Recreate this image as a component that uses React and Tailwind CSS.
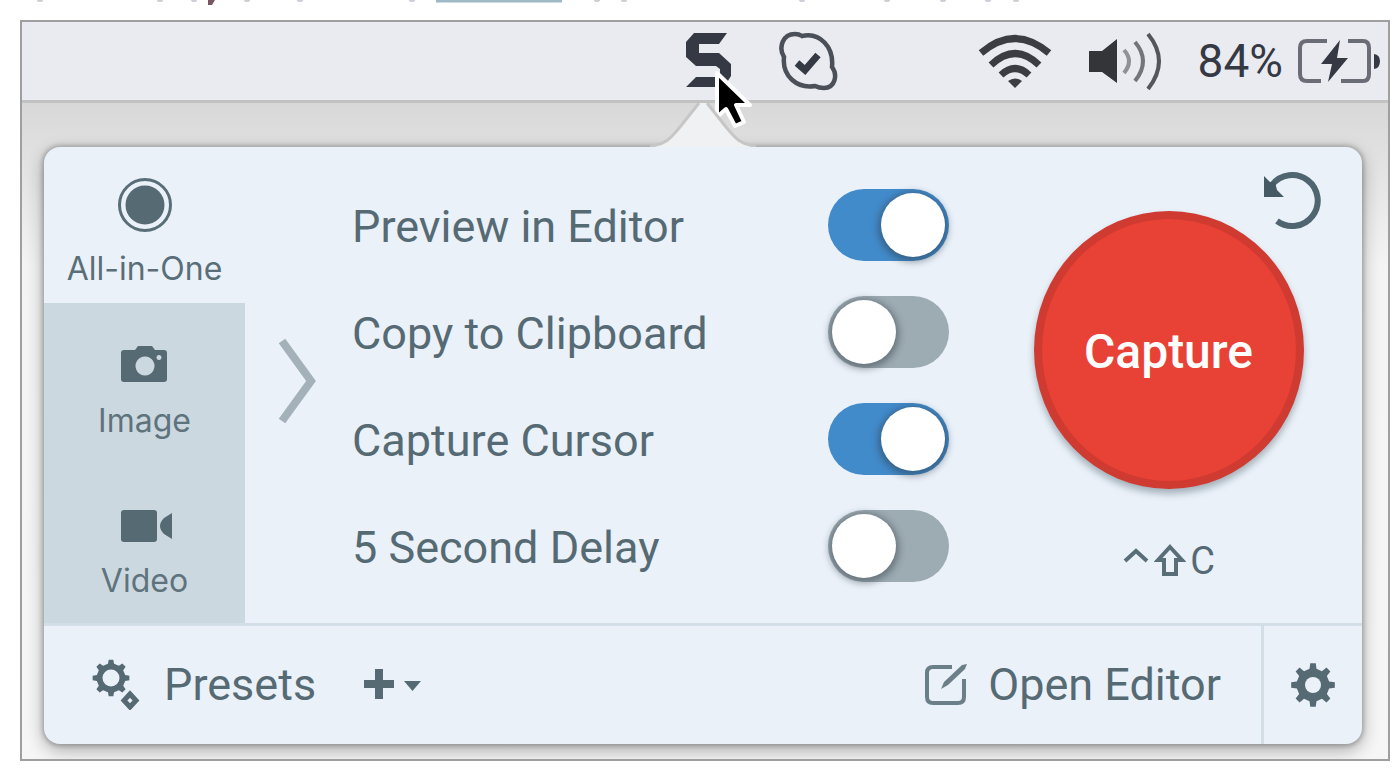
import { useState } from "react";

const tabs = [
  { id: "all", label: "All-in-One", icon: RecordIcon },
  { id: "image", label: "Image", icon: CameraIcon },
  { id: "video", label: "Video", icon: VideoIcon },
];

const options = [
  { id: "preview", label: "Preview in Editor", on: true },
  { id: "clipboard", label: "Copy to Clipboard", on: false },
  { id: "cursor", label: "Capture Cursor", on: true },
  { id: "delay", label: "5 Second Delay", on: false },
];

function gearPath(cx, cy, outer, inner, teeth) {
  const step = (Math.PI * 2) / teeth;
  const pt = (r, a) => `${(cx + r * Math.sin(a)).toFixed(2)} ${(cy - r * Math.cos(a)).toFixed(2)}`;
  let d = "";
  for (let i = 0; i < teeth; i++) {
    const a = i * step;
    d += `${i ? "L" : "M"}${pt(inner, a - step * 0.27)}L${pt(outer, a - step * 0.16)}L${pt(outer, a + step * 0.16)}L${pt(inner, a + step * 0.27)}`;
  }
  return d + "Z";
}

function RecordIcon() {
  return (
    <svg className="h-14 w-14" viewBox="0 0 56 56" aria-hidden="true">
      <circle cx="28" cy="28" r="25.5" fill="none" stroke="#5a6e78" strokeWidth="3" />
      <circle cx="28" cy="28" r="19.500" fill="#566a74" />
    </svg>
  );
}

function CameraIcon() {
  return (
    <svg className="h-14 w-14" viewBox="0 0 56 56" aria-hidden="true">
      <path
        fill="#566a74"
        fillRule="evenodd"
        d="M7 13h11l3-4h14l3 4h9q3 0 3 3v26q0 3-3 3H7q-3 0-3-3V16q0-3 3-3ZM28 19.500a9.500 9.500 0 1 0 .01 0ZM42 18a2.500 2.500 0 1 0 .01 0Z"
      />
    </svg>
  );
}

function VideoIcon() {
  return (
    <svg className="h-14 w-14" viewBox="0 0 56 56" aria-hidden="true">
      <rect x="4" y="13" width="36" height="32" rx="3" fill="#566a74" />
      <path d="M55 16v26l-8-5q-8-8 0-16Z" fill="#566a74" />
    </svg>
  );
}

function PageTextEdge() {
  return (
    <svg className="block h-5 w-[1400px]" viewBox="0 0 1400 20" aria-hidden="true">
      <path d="M436 0h126v2.500H436Z" fill="#9db9c6" />
      <path d="M208 0h7l-3 5h-4Z" fill="#7b5560" />
      {[40, 160, 194, 247, 300, 412, 597, 624, 802, 887, 943, 988, 1016].map((x) => (
        <ellipse key={x} cx={x} cy="0" rx="3" ry="2" fill="#cfcdd6" />
      ))}
    </svg>
  );
}

function Pointer() {
  return (
    <svg className="absolute top-9 left-6 z-10 h-16 w-12" viewBox="0 0 48 64" aria-hidden="true">
      <path
        d="M9 5V49L18 41L27 58L36 54L28 37H42Z"
        fill="#000"
        stroke="#fff"
        strokeWidth="4"
        strokeLinejoin="round"
      />
    </svg>
  );
}

function MenuBar() {
  return (
    <header className="flex h-[81px] items-center justify-end border-b-3 border-[#c2c2c2] bg-[#e9ebf0] pr-[7px]">
      <div className="relative mr-11">
        <button type="button" aria-label="Capture menu" className="block">
          <svg className="h-[58px] w-[50px]" viewBox="0 0 50 58">
            <path
              d="M10 1H43L35 12H15V21H35L47 32V44L40 55H2L12 45H36V37L32 34H12L2 25V10Z"
              fill="#343944"
            />
          </svg>
        </button>
        <Pointer />
      </div>
      <svg className="mr-[140px] h-[60px] w-[60px]" viewBox="0 0 60 60" aria-hidden="true">
        <path
          d="M17 3Q21 3 24 5C42 1 56 16 54 36C60 44 57 57 46 57Q41 57 37 55C19 58 4 45 6 26C0 16 5 3 17 3Z"
          fill="none"
          stroke="#4b4f58"
          strokeWidth="4.500"
        />
        <path d="M19 32L27 39L40 24" fill="none" stroke="#343944" strokeWidth="7" />
      </svg>
      <svg className="mr-9 h-[54px] w-[74px]" viewBox="0 0 74 54" aria-hidden="true">
        <g fill="none" stroke="#3b3d43" strokeWidth="7">
          <path d="M3 19Q37-10 71 19" />
          <path d="M13 31Q37 8 61 31" />
          <path d="M23 41Q37 28 51 41" />
        </g>
        <path d="M30 47Q37 42 44 47L37 54Z" fill="#3b3d43" />
      </svg>
      <svg className="mr-9 h-[58px] w-[74px]" viewBox="0 0 74 58" aria-hidden="true">
        <path d="M1 19H14L29 7V51L14 40H1Z" fill="#343539" />
        <g fill="none" strokeWidth="4">
          <path d="M36 18Q46 29 36 41" stroke="#8f9197" />
          <path d="M47 10Q63 29 47 49" stroke="#73757b" />
          <path d="M60 2Q82 29 60 57" stroke="#54565c" />
        </g>
      </svg>
      <span className="mr-[14px] text-[46px] leading-none text-[#343944]">84%</span>
      <svg className="h-[46px] w-[84px]" viewBox="0 0 84 46" aria-hidden="true">
        <g fill="none" stroke="#6a6c76" strokeWidth="4">
          <path d="M30 3H10Q3 3 3 10V36Q3 43 10 43H24" />
          <path d="M51 3H66Q72 3 72 10V36Q72 43 66 43H44" />
        </g>
        <path d="M43 2L24 26H35L31 44L51 20H40Z" fill="#343944" />
        <path d="M77 16Q83 17 83 23Q83 30 77 31Z" fill="#343944" />
      </svg>
    </header>
  );
}

function CaptureTabs() {
  const [active, setActive] = useState("all");
  return (
    <nav className="grid w-[201px] shrink-0 grid-rows-[156px_160px_1fr] font-[Inter,sans-serif] text-[32px] leading-10">
      {tabs.map(({ id, label, icon: Icon }) => (
        <button
          key={id}
          type="button"
          aria-pressed={active === id}
          onClick={() => setActive(id)}
          className={
            active === id
              ? "flex flex-col items-center justify-center gap-4 pt-4 text-[#5a6e78]"
              : "flex flex-col items-center justify-center gap-2 bg-[#ccd8e0] pt-3 text-[#5f737d]"
          }
        >
          <Icon />
          {label}
        </button>
      ))}
    </nav>
  );
}

function OptionRow({ id, label, on }) {
  return (
    <li className="flex h-[107px] items-center justify-between">
      <label htmlFor={id} className="pt-1">
        {label}
      </label>
      <input
        id={id}
        type="checkbox"
        role="switch"
        defaultChecked={on}
        className="h-[72px] w-[121px] appearance-none rounded-full bg-[#9dabb3] p-1 before:block before:h-16 before:w-16 before:rounded-full before:bg-white before:shadow-[0_2px_7px_3px_rgba(40,50,60,0.45)] checked:bg-[#428bcb] checked:before:ml-[49px]"
      />
    </li>
  );
}

function CapturePanel() {
  return (
    <div className="relative flex w-[413px] shrink-0 flex-col items-center pt-16 pl-[26px]">
      <button
        type="button"
        className="h-[278px] w-[270px] rounded-[50%] border-8 border-[#cf3a31] bg-[#e84135] pt-1 text-[48px] font-medium text-white shadow-[0_5px_7px_rgba(60,80,90,0.4)]"
      >
        Capture
      </button>
      <div className="mt-12 flex items-center gap-1 text-[38px] leading-[48px]">
        <svg className="mb-3 h-4 w-7" viewBox="0 0 28 16" aria-hidden="true">
          <path d="M3 14L14 4L25 14" fill="none" stroke="#5a6e78" strokeWidth="4" />
        </svg>
        <svg className="h-9 w-8" viewBox="0 0 32 36" aria-hidden="true">
          <path
            d="M16 4L28 17H22V31H10V17H4Z"
            fill="none"
            stroke="#5a6e78"
            strokeWidth="4"
          />
        </svg>
        <span>C</span>
      </div>
      <button type="button" aria-label="Reset" className="absolute top-6 right-10">
        <svg className="block h-[60px] w-[60px]" viewBox="0 0 60 60">
          <path
            d="M10 14A25.500 25.500 0 1 1 15 50"
            fill="none"
            stroke="#4f656f"
            strokeWidth="6"
          />
          <path d="M2 5V26H22L15 19L13 11L8 11Z" fill="#455a64" />
        </svg>
      </button>
    </div>
  );
}

function Footer() {
  return (
    <footer className="flex h-[121px] items-stretch border-t-3 border-[#d3dee6] pb-[2px]">
      <button type="button" className="flex items-center gap-6 pl-12">
        <svg className="h-[52px] w-12" viewBox="0 0 48 52" aria-hidden="true">
          <path d={gearPath(19, 20, 18.5, 14.5, 8)} fill="#566a74" />
          <circle cx="19" cy="20" r="8.500" fill="#eaf1f9" />
          <path d="M38 36L44 42.500L38 49L32 42.500Z" fill="none" stroke="#566a74" strokeWidth="5" />
        </svg>
        Presets
      </button>
      <button type="button" aria-label="Add preset" className="ml-11 flex items-center">
        <svg className="h-[34px] w-[62px]" viewBox="0 0 62 34" aria-hidden="true">
          <path d="M4 17H34M19 2V32" stroke="#566a74" strokeWidth="8" />
          <path d="M44 14H61L52.500 24Z" fill="#566a74" />
        </svg>
      </button>
      <button type="button" className="ml-auto flex items-center gap-5 pr-10">
        <svg className="h-11 w-11" viewBox="0 0 44 44" aria-hidden="true">
          <path
            d="M28 5H9Q3 5 3 11V35Q3 41 9 41H34Q40 41 40 35V17"
            fill="none"
            stroke="#6b7f88"
            strokeWidth="4"
          />
          <path d="M17 27L20 20L38 3L43 2L41 7L24 23Z" fill="#6b7f88" />
        </svg>
        Open Editor
      </button>
      <button
        type="button"
        aria-label="Settings"
        className="-mb-[2px] flex w-[101px] items-center justify-center border-l-3 border-[#d3dee6]"
      >
        <svg className="h-11 w-11" viewBox="0 0 44 44" aria-hidden="true">
          <path d={gearPath(22, 22, 22, 16.5, 8)} fill="#566a74" />
          <circle cx="22" cy="22" r="8" fill="#eaf1f9" />
        </svg>
      </button>
    </footer>
  );
}

export default function App() {
  return (
    <div className="overflow-hidden bg-white pb-3 font-[Roboto,sans-serif]">
      <PageTextEdge />
      <main className="mr-[10px] ml-5 overflow-hidden border-2 border-[#9f9f9f] bg-[#f6f6f6]">
        <MenuBar />
        <div className="bg-linear-to-b from-[#d8d8d8] via-[#f4f4f4] via-25% to-[#f6f6f6] pr-[26px] pb-[15px] pl-[22px]">
          <svg className="relative z-10 mx-auto block h-11 w-[120px]" viewBox="0 0 120 44" aria-hidden="true">
            <path d="M7 44C24 42 30 32 37 24L56 0H64L83 24C90 32 96 42 113 44Z" fill="#f0f1f3" />
            <path
              d="M7 43C24 42 30 32 37 24L56 0M64 0L83 24C90 32 96 42 113 43"
              fill="none"
              stroke="#c6c6c6"
              strokeWidth="3"
            />
          </svg>
          <section className="overflow-hidden rounded-2xl bg-[#eaf1f9] text-[45px] leading-none text-[#566a74] shadow-[0_0_4px_2px_rgba(0,0,0,0.2),0_6px_18px_rgba(0,0,0,0.32)]">
            <div className="flex">
              <CaptureTabs />
              <button type="button" aria-label="Expand" className="shrink-0 pb-2 pl-8">
                <svg className="block h-[88px] w-10" viewBox="0 0 40 88" aria-hidden="true">
                  <path d="M5 4L34 44L5 84" fill="none" stroke="#a5b1b8" strokeWidth="8" />
                </svg>
              </button>
              <ul className="grow py-6 pl-[35px]">
                {options.map((option) => (
                  <OptionRow key={option.id} {...option} />
                ))}
              </ul>
              <CapturePanel />
            </div>
            <Footer />
          </section>
        </div>
      </main>
    </div>
  );
}
